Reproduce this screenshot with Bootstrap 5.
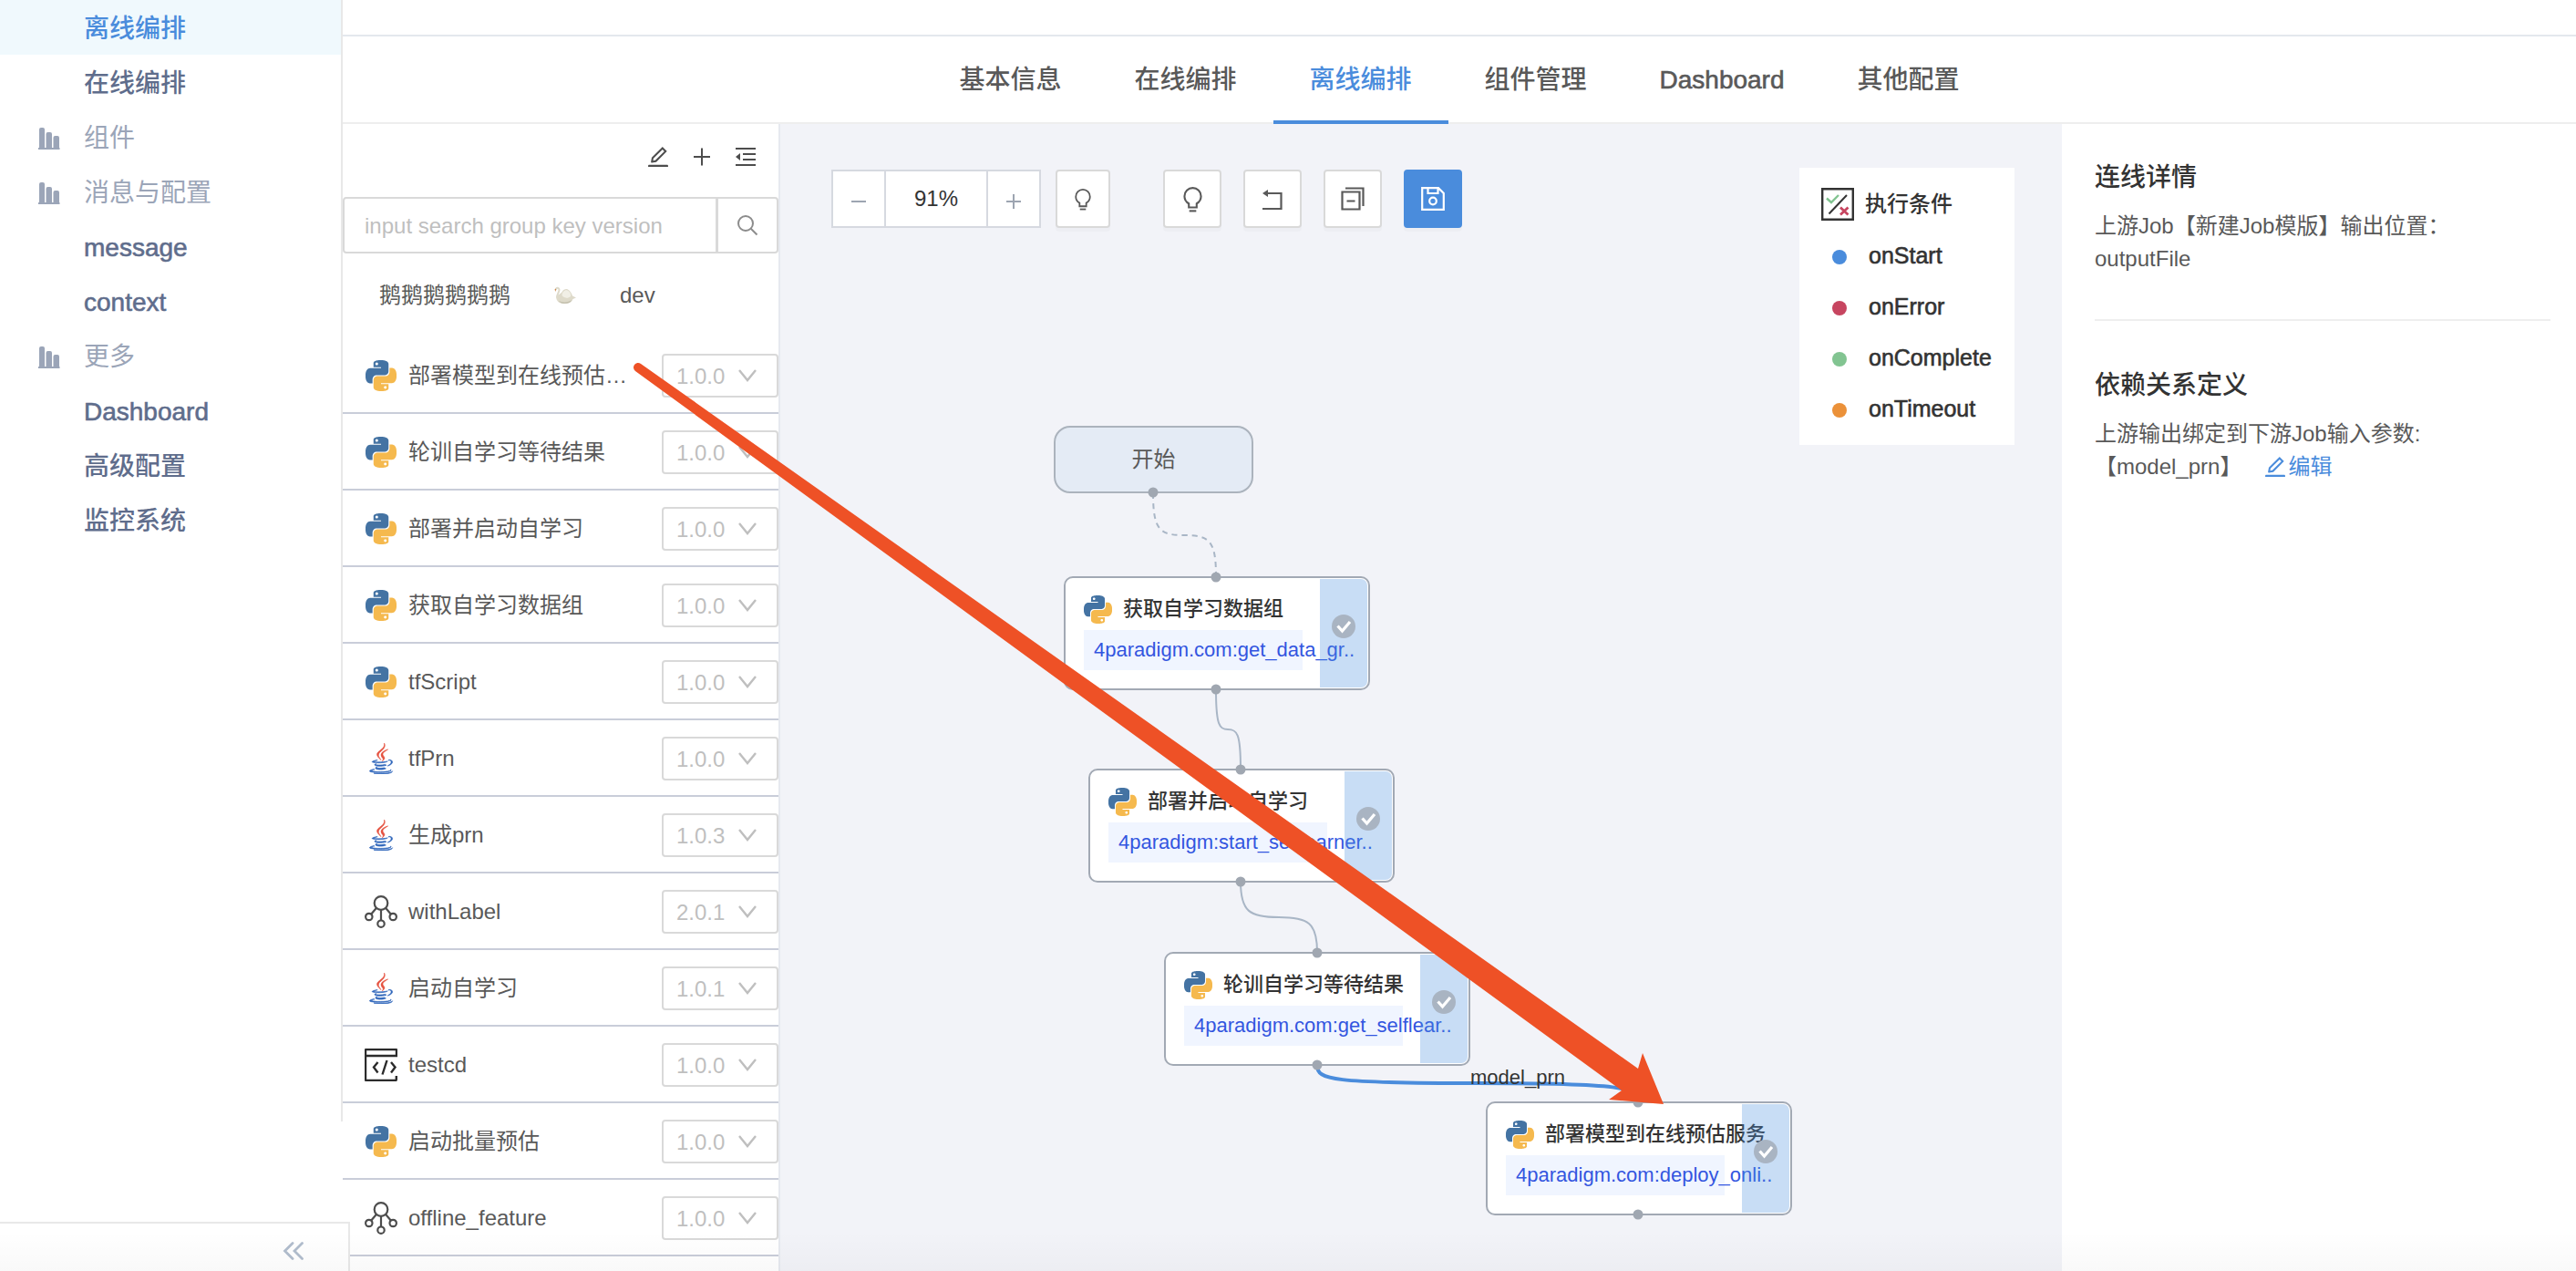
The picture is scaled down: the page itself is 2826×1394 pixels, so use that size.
<!DOCTYPE html>
<html lang="zh-CN">
<head>
<meta charset="utf-8">
<meta name="viewport" content="width=device-width, initial-scale=1">
<title>离线编排</title>
<link rel="stylesheet" href="https://cdn.jsdelivr.net/npm/bootstrap@5.3.0/dist/css/bootstrap.min.css">
<style>
  body { font-family: "Liberation Sans", "Noto Sans CJK SC", sans-serif; font-size: 24px; line-height: 36px; color: #595959; background: #fff; }
  svg { display: block; flex-shrink: 0; }
  .medium { font-weight: 500; }
  .latin { -webkit-text-stroke: 0.6px currentColor; }

  /* sidebar */
  .side { width: 376px; }
  .side-nav { height: calc(100% - 164px); border-right: 2px solid #e8e8e8; font-size: 28px; }
  .side-nav a { height: 60px; padding: 3px 0 0 92px; color: #5f6d8c; text-decoration: none; }
  .side-nav a.active { background: #f0f9fd; color: #4a8cdc; }
  .side-group { height: 60px; padding: 3px 0 0 42px; gap: 26px; color: #9ba5b8; }
  .side-foot { width: 384px; height: 54px; border: solid #e8e8e8; border-width: 2px 2px 0 0; background: #fff; padding-right: 48px; }
  .bottom-fade { height: 44px; background: linear-gradient(rgba(0,0,0,0), rgba(0,0,0,.025)); pointer-events: none; }

  /* header */
  .top-strip { height: 40px; border-bottom: 2px solid #e4e8ed; }
  .tabs { height: 96px; border-bottom: 2px solid #eee; font-size: 28px; }
  .tabs .nav-link { height: 96px; padding: 3px 40px 0; color: #595959; border-bottom: 4px solid transparent; }
  .tabs .nav-link.active { color: #4a8cdc; border-color: #4a8cdc; }

  /* component panel */
  .parts { width: 480px; border-right: 2px solid #e6e9ef; }
  .parts-tools { height: 80px; gap: 20px; padding: 0 22px 8px 0; }
  .icon-btn { color: #4d4d4d; background: none; border: 0; padding: 0; }
  .search { height: 62px; }
  .search .form-control { height: 62px; border: 2px solid #d9d9d9; border-radius: 4px; font-size: 24px; padding: 2px 22px 0; color: #595959; }
  .search .form-control::placeholder { color: #bfbfbf; }
  .search .btn { width: 68px; border: 2px solid #d9d9d9; border-radius: 4px; color: #8c8c8c; padding: 0; }
  .tags { height: 92px; padding-left: 40px; gap: 48px; }
  .part { height: 84px; border-bottom: 2px solid #c9cdd9; padding: 2px 0 0 24px; }
  .part-icon { width: 36px; margin-right: 12px; }
  .part .form-select { width: 128px; height: 48px; border: 2px solid #d9d9d9; border-radius: 4px; font-size: 24px; line-height: 32px; padding: 2px 36px 0 14px; color: #bfbfbf;
    background-image: url("data:image/svg+xml,%3Csvg xmlns='http://www.w3.org/2000/svg' viewBox='0 0 22 16'%3E%3Cpath d='M2 2l9 11 9-11' fill='none' stroke='%23bfbfbf' stroke-width='2.4'/%3E%3C/svg%3E"); background-size: 22px 16px; background-position: right 21px center; }

  /* canvas */
  .flow { background: #f2f3f8; overflow: hidden; }
  .toolbar { padding: 50px 56px; gap: 24px; }
  .zoomer { height: 64px; border: 2px solid #d6d9e0; background: #fff; color: #333; }
  .zoomer button { width: 56px; color: #9da5b1; border: 0; background: none; padding: 6px 0 0; }
  .zoomer output { width: 114px; border: solid #d6d9e0; border-width: 0 2px; }
  .tool { width: 64px; height: 64px; padding: 0; border: 2px solid #d9d9d9; border-radius: 4px; background: #fff; color: #595959; box-shadow: 0 4px 0 rgba(0,0,0,.02); }
  .tool-narrow { width: 60px; margin: 0 34px 0 -8px; }
  .tool-primary { background: #4a8cdc; border-color: #4a8cdc; color: #fff; }
  .legend { top: 48px; right: 52px; width: 236px; background: #fff; color: #333; padding: 18px 0 12px 24px; font-size: 25px; }
  .legend-title { font-size: 24px; height: 44px; gap: 12px; margin-bottom: 6px; }
  .legend li { height: 56px; gap: 24px; padding-left: 12px; }
  .dot { width: 16px; height: 16px; border-radius: 50%; margin-top: 3px; }
  .edges { left: 0; top: 0; overflow: visible; }
  .node-start { width: 219px; height: 74px; border: 2px solid #abb3bd; border-radius: 18px; background: #e4ebf5; }
  .node { width: 336px; height: 125px; border: 2px solid #a2a9b4; border-radius: 10px; background: #fff; padding: 16px 0 0 20px; font-size: 22px; color: #333; white-space: nowrap; }
  .node-name { height: 36px; gap: 12px; }
  .node-path { width: 240px; height: 44px; margin-top: 5px; padding-left: 11px; line-height: 44px; background: #f0f5ff; color: #3356e0; }
  .node-state { top: 1px; right: 1px; bottom: 1px; width: 52px; background: rgba(74,141,222,.3); border-radius: 0 7px 7px 0; padding-bottom: 16px; }
  .edge-name { font-size: 22px; color: #333; }

  /* detail */
  .detail { width: 564px; padding: 38px 28px 0 36px; }
  .detail h2 { font-size: 28px; line-height: 42px; color: #333; margin: 0 0 14px; }
  .detail hr { margin: 48px 0 50px; border-top: 2px solid #eee; opacity: 1; }
  .detail a { color: #4a8cdc; text-decoration: none; margin-left: 23px; }
  .arrow { left: 0; top: 0; pointer-events: none; }
</style>
<script src="https://cdn.jsdelivr.net/npm/bootstrap@5.3.0/dist/js/bootstrap.bundle.min.js"></script>
</head>
<body class="vh-100 overflow-hidden position-relative d-flex">

<svg class="d-none" aria-hidden="true">
  <symbol id="python" viewBox="0 0 24 24">
    <path fill="#4473a3" d="M14.25.18l.9.2.73.26.59.3.45.32.34.34.25.34.16.33.1.3.04.26.02.2-.01.13V8.5l-.05.63-.13.55-.21.46-.26.38-.3.31-.33.25-.35.19-.35.14-.33.1-.3.07-.26.04-.21.02H8.77l-.69.05-.59.14-.5.22-.41.27-.33.32-.27.35-.2.36-.15.37-.1.35-.07.32-.04.27-.02.21v3.06H3.17l-.21-.03-.28-.07-.32-.12-.35-.18-.36-.26-.36-.36-.35-.46-.32-.59-.28-.73-.21-.88-.14-1.05-.05-1.23.06-1.22.16-1.04.24-.87.32-.71.36-.57.4-.44.42-.33.42-.24.4-.16.36-.1.32-.05.24-.01h.16l.06.01h8.16v-.83H6.18l-.01-2.75-.02-.37.05-.34.11-.31.17-.28.25-.26.31-.23.38-.2.44-.18.51-.15.58-.12.64-.1.71-.06.77-.04.84-.02 1.27.05zm-6.3 1.98l-.23.33-.08.41.08.41.23.34.33.22.41.09.41-.09.33-.22.23-.34.08-.41-.08-.41-.23-.33-.33-.22-.41-.09-.41.09z"/>
    <path fill="#f5b94e" d="M21.04 6.11l.28.06.32.12.35.18.36.27.36.35.35.47.32.59.28.73.21.88.14 1.04.05 1.23-.06 1.23-.16 1.04-.24.86-.32.71-.36.57-.4.45-.42.33-.42.24-.4.16-.36.09-.32.05-.24.02-.16-.01h-8.22v.82h5.84l.01 2.76.02.36-.05.34-.11.31-.17.29-.25.25-.31.24-.38.2-.44.17-.51.15-.58.13-.64.09-.71.07-.77.04-.84.01-1.27-.04-1.07-.14-.9-.2-.73-.25-.59-.3-.45-.33-.34-.34-.25-.34-.16-.33-.1-.3-.04-.25-.02-.2.01-.13v-5.34l.05-.64.13-.54.21-.46.26-.38.3-.32.33-.24.35-.2.35-.14.33-.1.3-.06.26-.04.21-.02.13-.01h5.84l.69-.05.59-.14.5-.21.41-.28.33-.32.27-.35.2-.36.15-.36.1-.35.07-.32.04-.28.02-.21V6.07h2.09l.14.01zm-6.47 14.25l-.23.33-.08.41.08.41.23.33.33.23.41.08.41-.08.33-.23.23-.33.08-.41-.08-.41-.23-.33-.33-.23-.41-.08-.41.08z"/>
  </symbol>
  <symbol id="java" viewBox="0 0 24 24">
    <path fill="#2f66bb" stroke="#2f66bb" stroke-width=".5" d="M8.851 18.56s-.917.534.653.714c1.902.218 2.874.187 4.969-.211 0 0 .552.346 1.321.646-4.699 2.013-10.633-.118-6.943-1.149M8.276 15.933s-1.028.761.542.924c2.032.209 3.636.227 6.413-.308 0 0 .384.389.987.602-5.679 1.661-12.007.13-7.942-1.218M19.33 20.504s.679.559-.747.991c-2.712.822-11.288 1.069-13.669.033-.856-.373.75-.89 1.254-.998.527-.114.828-.093.828-.093-.953-.671-6.156 1.317-2.643 1.887 9.58 1.553 17.462-.7 14.977-1.82M9.292 13.21s-4.362 1.036-1.544 1.412c1.189.159 3.561.123 5.77-.062 1.806-.152 3.618-.477 3.618-.477s-.637.272-1.098.587c-4.429 1.165-12.986.623-10.522-.568 2.082-1.006 3.776-.892 3.776-.892M17.116 17.584c4.503-2.34 2.421-4.589.968-4.285-.355.074-.515.138-.515.138s.132-.207.385-.297c2.875-1.011 5.086 2.981-.928 4.562 0-.001.07-.062.09-.118M9.734 23.924c4.322.277 10.959-.153 11.116-2.198 0 0-.302.775-3.572 1.391-3.688.694-8.239.613-10.937.168 0-.001.553.457 3.393.639"/>
    <path fill="#e5513f" stroke="#e5513f" stroke-width=".4" d="M13.116 11.475c1.158 1.333-.304 2.533-.304 2.533s2.939-1.518 1.589-3.418c-1.261-1.772-2.228-2.652 3.007-5.688 0-.001-8.216 2.051-4.292 6.573M14.401 0s2.494 2.494-2.365 6.33c-3.896 3.077-.888 4.832-.001 6.836-2.274-2.053-3.943-3.858-2.824-5.539 1.644-2.469 6.197-3.665 5.19-7.627"/>
  </symbol>
  <symbol id="tree" viewBox="0 0 36 36">
    <g fill="none" stroke="#4d4d4d" stroke-width="2.2"><circle cx="18" cy="8.500" r="7.300"/><circle cx="4.800" cy="23.500" r="3.700"/><circle cx="31.200" cy="23.500" r="3.700"/><circle cx="18" cy="31.200" r="3.700"/><path d="M18 16v11.500M12.800 14l-5.500 6.500M23.200 14l5.500 6.500"/></g>
  </symbol>
  <symbol id="code" viewBox="0 0 36 36">
    <g fill="none" stroke="#2b2b2b" stroke-width="2.4"><path d="M34.800 30v4a1 1 0 0 1-1 1H2a1 1 0 0 1-1-1V2a1 1 0 0 1 1-1h32a1 1 0 0 1 1 1v6H1.500"/><path d="M14.500 15L10 20.500l4.500 6M29 15l4.500 5.500-4.500 6M24.500 13l-5 15.500"/></g>
  </symbol>
  <symbol id="bars" viewBox="0 0 24 24"><path fill="#9ba5b8" d="M1 2a2 2 0 0 1 2-2h2a2 2 0 0 1 2 2v20h1.500V7a2 2 0 0 1 2-2h2.500a2 2 0 0 1 2 2v15h1.500V11a2 2 0 0 1 2-2h2.500a2 2 0 0 1 2 2v11h.5v2H0v-2h1z"/></symbol>
  <symbol id="pen" viewBox="0 0 1024 1024"><path fill="currentColor" d="M257.700 752c2 0 4-.2 6-.5L431.900 722c2-.4 3.900-1.300 5.300-2.800l423.900-423.900a9.960 9.960 0 000-14.100L694.900 114.900c-1.900-1.900-4.400-2.900-7.100-2.900s-5.200 1-7.100 2.900L256.800 538.800c-1.500 1.500-2.400 3.300-2.800 5.300l-29.500 168.200a33.500 33.500 0 009.400 29.800c6.600 6.400 14.900 9.900 23.800 9.900zm67.400-174.400L687.800 215l73.300 73.300-362.700 362.600-88.900 15.700 15.600-89zM880 836H144c-17.700 0-32 14.300-32 32v36c0 4.400 3.600 8 8 8h784c4.400 0 8-3.600 8-8v-36c0-17.700-14.300-32-32-32z"/></symbol>
  <symbol id="bulb" viewBox="0 0 22 30"><g fill="none" stroke="currentColor" stroke-width="2.2"><path d="M6.500 24.500v-4.500C3.500 18.200 1.500 15 1.500 11.500a9.500 9.500 0 0 1 19 0c0 3.500-2 6.700-5 8.500v4.500z"/><path d="M7 28.500h8"/></g></symbol>
  <symbol id="tick" viewBox="0 0 26 26"><circle cx="13" cy="13" r="13" fill="#a9b4c2"/><path d="M6.500 12.500l5 5.500 8.500-10" fill="none" stroke="#fff" stroke-width="3.200"/></symbol>
</svg>

<aside class="side flex-shrink-0 position-relative">
  <nav class="side-nav medium" aria-label="主菜单">
    <a class="active d-flex align-items-center" href="#">离线编排</a>
    <a class="d-flex align-items-center" href="#">在线编排</a>
    <div class="side-group d-flex align-items-center fw-normal"><svg width="24" height="24"><use href="#bars"/></svg>组件</div>
    <div class="side-group d-flex align-items-center fw-normal"><svg width="24" height="24"><use href="#bars"/></svg>消息与配置</div>
    <a class="latin d-flex align-items-center" href="#">message</a>
    <a class="latin d-flex align-items-center" href="#">context</a>
    <div class="side-group d-flex align-items-center fw-normal"><svg width="24" height="24"><use href="#bars"/></svg>更多</div>
    <a class="latin d-flex align-items-center" href="#">Dashboard</a>
    <a class="d-flex align-items-center" href="#">高级配置</a>
    <a class="d-flex align-items-center" href="#">监控系统</a>
  </nav>
  <div class="side-foot position-absolute bottom-0 start-0 z-1 d-flex align-items-center justify-content-end">
    <button class="icon-btn pt-3" type="button" aria-label="收起"><svg class="mb-2" width="24" height="20" viewBox="0 0 24 20" fill="none" stroke="#b1bdcd" stroke-width="2.800" stroke-linecap="round"><path d="M11 1.500L2.500 10l8.500 8.500M21.500 1.500L13 10l8.500 8.500"/></svg></button>
  </div>
</aside>

<div class="flex-grow-1 d-flex flex-column">
  <div class="top-strip flex-shrink-0"></div>
  <ul class="tabs nav flex-nowrap justify-content-center flex-shrink-0 medium">
    <li class="nav-item"><a class="nav-link d-flex align-items-center" href="#">基本信息</a></li>
    <li class="nav-item"><a class="nav-link d-flex align-items-center" href="#">在线编排</a></li>
    <li class="nav-item"><a class="nav-link d-flex align-items-center active" aria-current="page" href="#">离线编排</a></li>
    <li class="nav-item"><a class="nav-link d-flex align-items-center" href="#">组件管理</a></li>
    <li class="nav-item"><a class="nav-link latin d-flex align-items-center" href="#">Dashboard</a></li>
    <li class="nav-item"><a class="nav-link d-flex align-items-center" href="#">其他配置</a></li>
  </ul>

  <div class="d-flex flex-grow-1 overflow-hidden">
    <section class="parts flex-shrink-0 overflow-hidden">
      <div class="parts-tools d-flex align-items-center justify-content-end">
        <button class="icon-btn" type="button" aria-label="编辑"><svg width="28" height="28"><use href="#pen"/></svg></button>
        <button class="icon-btn" type="button" aria-label="新增"><svg width="28" height="28" viewBox="0 0 28 28" stroke="currentColor" stroke-width="2"><path d="M14 4.500v19M5 14h18"/></svg></button>
        <button class="icon-btn" type="button" aria-label="收起列表"><svg width="28" height="28" viewBox="0 0 28 28"><path d="M3 5h22M11 11h14M11 17h14M3 23h22" stroke="currentColor" stroke-width="2"/><path d="M8 10v8l-5-4z" fill="currentColor"/></svg></button>
      </div>
      <form class="search input-group flex-nowrap">
        <input class="form-control" type="search" placeholder="input search group key version" aria-label="搜索组件">
        <button class="btn d-flex align-items-center justify-content-center" type="button" aria-label="搜索"><svg width="24" height="24" viewBox="0 0 24 24" fill="none" stroke="currentColor" stroke-width="2"><circle cx="10" cy="10" r="8"/><path d="M15.500 15.500l7 7"/></svg></button>
      </form>
      <div class="tags d-flex align-items-center">
        <span>鹅鹅鹅鹅鹅鹅</span>
        <svg width="24" height="20" viewBox="0 0 24 20" role="img" aria-label="天鹅"><path fill="none" stroke="#dddacb" stroke-width="2" stroke-linecap="round" d="M2 3.200C2.500 1 5.300 1.200 5.500 3.800 5.700 6 3 8.500 3.200 12"/><path fill="#dedaca" d="M2.200 11.500C3.500 9 7 9 9 5.500c1-2 4-3 6-2 3 1.500 4 4.500 5 7l4 2-3.500 1.500C19 17.500 16 19 11 19c-5 0-9-2.500-8.800-7.500z"/><path fill="#c4c0ae" d="M5 16c4 2 10 2 14.500-1C18 18 15 19 11 19c-2.500 0-5-1-6-3z"/><path fill="#f1efe6" d="M8.500 10c0-4 4-7 7-5 2 1.500 3 4 2.500 6-2.500 2.500-7 2.500-9.500-1z"/><path fill="#c77a35" d="M.5 3.500L2 2.500 1.500 6z"/></svg>
        <span>dev</span>
      </div>
      <div>
        <div class="part d-flex align-items-center"><span class="part-icon"><svg class="mx-auto" width="34" height="34"><use href="#python"/></svg></span><span class="flex-grow-1 text-nowrap">部署模型到在线预估…</span><select class="form-select flex-shrink-0" aria-label="版本"><option>1.0.0</option></select></div>
        <div class="part d-flex align-items-center"><span class="part-icon"><svg class="mx-auto" width="34" height="34"><use href="#python"/></svg></span><span class="flex-grow-1 text-nowrap">轮训自学习等待结果</span><select class="form-select flex-shrink-0" aria-label="版本"><option>1.0.0</option></select></div>
        <div class="part d-flex align-items-center"><span class="part-icon"><svg class="mx-auto" width="34" height="34"><use href="#python"/></svg></span><span class="flex-grow-1 text-nowrap">部署并启动自学习</span><select class="form-select flex-shrink-0" aria-label="版本"><option>1.0.0</option></select></div>
        <div class="part d-flex align-items-center"><span class="part-icon"><svg class="mx-auto" width="34" height="34"><use href="#python"/></svg></span><span class="flex-grow-1 text-nowrap">获取自学习数据组</span><select class="form-select flex-shrink-0" aria-label="版本"><option>1.0.0</option></select></div>
        <div class="part d-flex align-items-center"><span class="part-icon"><svg class="mx-auto" width="34" height="34"><use href="#python"/></svg></span><span class="flex-grow-1 text-nowrap">tfScript</span><select class="form-select flex-shrink-0" aria-label="版本"><option>1.0.0</option></select></div>
        <div class="part d-flex align-items-center"><span class="part-icon"><svg class="mx-auto" width="34" height="34"><use href="#java"/></svg></span><span class="flex-grow-1 text-nowrap">tfPrn</span><select class="form-select flex-shrink-0" aria-label="版本"><option>1.0.0</option></select></div>
        <div class="part d-flex align-items-center"><span class="part-icon"><svg class="mx-auto" width="34" height="34"><use href="#java"/></svg></span><span class="flex-grow-1 text-nowrap">生成prn</span><select class="form-select flex-shrink-0" aria-label="版本"><option>1.0.3</option></select></div>
        <div class="part d-flex align-items-center"><span class="part-icon"><svg width="36" height="36"><use href="#tree"/></svg></span><span class="flex-grow-1 text-nowrap">withLabel</span><select class="form-select flex-shrink-0" aria-label="版本"><option>2.0.1</option></select></div>
        <div class="part d-flex align-items-center"><span class="part-icon"><svg class="mx-auto" width="34" height="34"><use href="#java"/></svg></span><span class="flex-grow-1 text-nowrap">启动自学习</span><select class="form-select flex-shrink-0" aria-label="版本"><option>1.0.1</option></select></div>
        <div class="part d-flex align-items-center"><span class="part-icon"><svg width="36" height="36"><use href="#code"/></svg></span><span class="flex-grow-1 text-nowrap">testcd</span><select class="form-select flex-shrink-0" aria-label="版本"><option>1.0.0</option></select></div>
        <div class="part d-flex align-items-center"><span class="part-icon"><svg class="mx-auto" width="34" height="34"><use href="#python"/></svg></span><span class="flex-grow-1 text-nowrap">启动批量预估</span><select class="form-select flex-shrink-0" aria-label="版本"><option>1.0.0</option></select></div>
        <div class="part d-flex align-items-center"><span class="part-icon"><svg width="36" height="36"><use href="#tree"/></svg></span><span class="flex-grow-1 text-nowrap">offline_feature</span><select class="form-select flex-shrink-0" aria-label="版本"><option>1.0.0</option></select></div>
      </div>
    </section>

    <main class="flow flex-grow-1 position-relative">
      <div class="toolbar d-flex">
        <div class="zoomer d-flex">
          <button class="d-flex align-items-center justify-content-center" type="button" aria-label="缩小"><svg width="18" height="18" viewBox="0 0 18 18" stroke="currentColor" stroke-width="2"><path d="M1 9h16"/></svg></button>
          <output class="d-flex align-items-center justify-content-center">91%</output>
          <button class="d-flex align-items-center justify-content-center" type="button" aria-label="放大"><svg width="18" height="18" viewBox="0 0 18 18" stroke="currentColor" stroke-width="2"><path d="M1 9h16M9 1v16"/></svg></button>
        </div>
        <button class="tool tool-narrow d-flex align-items-center justify-content-center" type="button" aria-label="提示"><svg width="18" height="25"><use href="#bulb"/></svg></button>
        <button class="tool d-flex align-items-center justify-content-center" type="button" aria-label="说明"><svg width="21" height="29"><use href="#bulb"/></svg></button>
        <button class="tool d-flex align-items-center justify-content-center" type="button" aria-label="撤销"><svg class="mt-1" width="24" height="24" viewBox="0 0 24 24"><path d="M6 4h15.500v17H1" fill="none" stroke="currentColor" stroke-width="2.200"/><path d="M1 4l6-4v8z" fill="currentColor"/></svg></button>
        <button class="tool d-flex align-items-center justify-content-center" type="button" aria-label="复制"><svg width="26" height="26" viewBox="0 0 26 26" fill="none" stroke="currentColor" stroke-width="2.200"><path d="M5 1.500h19.500V21M1.500 5.500h19v19h-19zM6.500 15.500h9"/></svg></button>
        <button class="tool tool-primary d-flex align-items-center justify-content-center" type="button" aria-label="保存"><svg width="26" height="26" viewBox="0 0 26 26" fill="none" stroke="currentColor" stroke-width="2.200"><path d="M1.200 1.200h17.800l5.800 5.800v17.800H1.200zM7.500 1.500v5.500h11V1.500"/><circle cx="13" cy="15.500" r="3.800"/></svg></button>
      </div>

      <div class="legend position-absolute medium">
        <div class="legend-title d-flex align-items-center">
          <svg width="36" height="36" viewBox="0 0 36 36" fill="none"><path d="M1.200 1.200h33.600v33.600H1.200z" stroke="#333" stroke-width="2.400"/><path d="M28 8L8.500 28.500" stroke="#333" stroke-width="2"/><path d="M6 11.500l5 4.500 8-8" stroke="#82c491" stroke-width="2.400"/><path d="M21 21.500l8.500 8M29.500 21.500l-8.500 8" stroke="#c74560" stroke-width="2.800"/></svg>执行条件
        </div>
        <ul class="list-unstyled latin mb-0">
          <li class="d-flex align-items-center"><span class="dot" style="background:#4a8cdc"></span>onStart</li>
          <li class="d-flex align-items-center"><span class="dot" style="background:#c74560"></span>onError</li>
          <li class="d-flex align-items-center"><span class="dot" style="background:#82c491"></span>onComplete</li>
          <li class="d-flex align-items-center"><span class="dot" style="background:#eb9139"></span>onTimeout</li>
        </ul>
      </div>

      <svg class="edges position-absolute" width="1100" height="1240" fill="none" stroke="#a9b6c6" stroke-width="2">
        <path d="M409 405C409 445 416 451 443 451C471 451 478 457 478 496" stroke-dasharray="6 5"/>
        <path d="M478 621C478 660 482 664 491 664C501 664 505 668 505 707"/>
        <path d="M505 831C505 864 515 870 547 870C579 870 589 876 589 908"/>
        <path d="M589 1033C589 1048 605 1052 765 1052C925 1052 941 1057 941 1072" stroke="#4a8cdc" stroke-width="4"/>
      </svg>

      <div class="node-start position-absolute d-flex align-items-center justify-content-center" style="left:300px;top:331px">开始</div>
      <div class="node position-absolute" style="left:311px;top:496px">
        <div class="node-name d-flex align-items-center medium"><svg width="31" height="31"><use href="#python"/></svg>获取自学习数据组</div>
        <div class="node-path">4paradigm.com:get_data_gr..</div>
        <div class="node-state position-absolute d-flex align-items-center justify-content-center"><svg width="26" height="26"><use href="#tick"/></svg></div>
      </div>
      <div class="node position-absolute" style="left:338px;top:707px">
        <div class="node-name d-flex align-items-center medium"><svg width="31" height="31"><use href="#python"/></svg>部署并启动自学习</div>
        <div class="node-path">4paradigm:start_selflearner..</div>
        <div class="node-state position-absolute d-flex align-items-center justify-content-center"><svg width="26" height="26"><use href="#tick"/></svg></div>
      </div>
      <div class="node position-absolute" style="left:421px;top:908px">
        <div class="node-name d-flex align-items-center medium"><svg width="31" height="31"><use href="#python"/></svg>轮训自学习等待结果</div>
        <div class="node-path">4paradigm.com:get_selflear..</div>
        <div class="node-state position-absolute d-flex align-items-center justify-content-center"><svg width="26" height="26"><use href="#tick"/></svg></div>
      </div>
      <div class="node position-absolute" style="left:774px;top:1072px">
        <div class="node-name d-flex align-items-center medium"><svg width="31" height="31"><use href="#python"/></svg>部署模型到在线预估服务</div>
        <div class="node-path">4paradigm.com:deploy_onli..</div>
        <div class="node-state position-absolute d-flex align-items-center justify-content-center"><svg width="26" height="26"><use href="#tick"/></svg></div>
      </div>
      <div class="edge-name position-absolute" style="left:757px;top:1028px">model_prn</div>

      <!-- connection ports -->
      <svg class="edges position-absolute" width="1100" height="1240" fill="#a0a7b1">
        <circle cx="409" cy="404" r="5.500"/><circle cx="478" cy="497" r="5.500"/><circle cx="478" cy="620" r="5.500"/>
        <circle cx="505" cy="708" r="5.500"/><circle cx="505" cy="831" r="5.500"/><circle cx="589" cy="909" r="5.500"/>
        <circle cx="589" cy="1032" r="5.500"/><circle cx="941" cy="1073" r="5.500"/><circle cx="941" cy="1196" r="5.500"/>
      </svg>
    </main>

    <section class="detail flex-shrink-0">
      <h2 class="medium">连线详情</h2>
      <p class="mb-0">上游Job【新建Job模版】输出位置：<br>outputFile</p>
      <hr>
      <h2 class="medium">依赖关系定义</h2>
      <div>上游输出绑定到下游Job输入参数:</div>
      <div class="d-flex">【model_prn】<a class="d-flex align-items-center" href="#"><svg width="28" height="28"><use href="#pen"/></svg>编辑</a></div>
    </section>
  </div>
</div>

<div class="bottom-fade position-absolute bottom-0 start-0 w-100 z-2"></div>

<!-- drag direction from the component list to the node -->
<svg class="arrow position-absolute z-3" width="1840" height="1230" fill="#ee5126"><path d="M703 399L1797 1172L1802 1155L1825 1211L1765 1206L1779 1196L697 407A5 5 0 0 1 703 399z"/></svg>

</body>
</html>
